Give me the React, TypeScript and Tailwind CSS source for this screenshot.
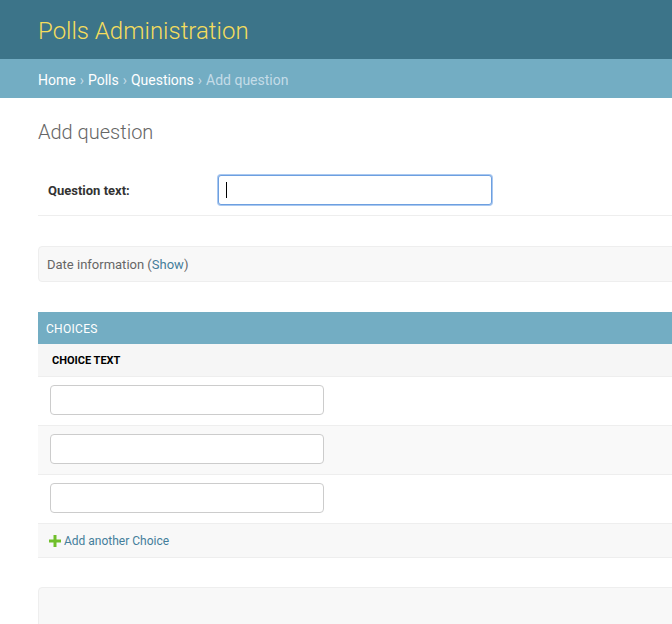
import React from 'react';

const font = { fontFamily: 'Roboto, "Liberation Sans", sans-serif' };

function ChoiceRow({ alt }: { alt?: boolean }) {
  return (
    <div className={`h-[49px] flex items-start pt-[8px] pl-3 border-b border-[#eeeeee] ${alt ? 'bg-[#f9f9f9]' : 'bg-white'}`}>
      <input
        type="text"
        className="w-[274px] h-[30px] border border-[#cccccc] rounded-[4px] bg-white px-1.5 text-[13px] outline-none"
      />
    </div>
  );
}

export default function App() {
  return (
    <div className="w-[672px] h-[624px] overflow-hidden bg-white text-[#333]" style={font}>
      {/* Header */}
      <div className="h-[59px] bg-[#3c7489] flex items-center px-[38px] pt-[3px]">
        <h1 className="text-[24px] font-light text-[#f5dd5d] leading-none">Polls Administration</h1>
      </div>

      {/* Breadcrumbs */}
      <div className="h-[39px] bg-[#73adc3] flex items-center px-[38px] pt-[3px] text-[14px] text-[#c4dce8]">
        <a className="text-white">Home</a>
        <span className="mx-[4px]">›</span>
        <a className="text-white">Polls</a>
        <span className="mx-[4px]">›</span>
        <a className="text-white">Questions</a>
        <span className="mx-[4px]">›</span>
        <span>Add question</span>
      </div>

      {/* Content */}
      <div className="pl-[38px] w-[760px]">
        <h1 className="text-[20px] font-light text-[#666] mt-[22px] leading-[24px]">Add question</h1>

        <div className="mt-[31px] flex items-center h-[30px] border-b border-[#eeeeee] pl-[10px] pb-[10px] box-content">
          <label className="w-[170px] text-[13px] font-bold text-[#333] pt-[1px]">Question text:</label>
          <div className="h-[30px] w-[274px] border border-[#6d9fe0] rounded-[3px] ring-1 ring-[#a9c8f0] bg-white flex items-center pl-[7px]">
            <span className="w-[1px] h-[16px] bg-black" />
          </div>
        </div>

        {/* Collapsed fieldset */}
        <div className="mt-[30px] h-[36px] bg-[#f8f8f8] border border-[#eeeeee] rounded-l-[4px] flex items-center pl-[8px] pt-[1px] text-[13px] text-[#666]">
          Date information&nbsp;(<a className="text-[#447e9b]">Show</a>)
        </div>

        {/* Inline */}
        <div className="mt-[30px]">
          <div className="h-[32px] bg-[#73adc3] flex items-center pl-[8px] pt-[1px] text-[12px] text-white tracking-[0.3px]">CHOICES</div>
          <div className="h-[33px] bg-[#f6f6f6] border-b border-[#eeeeee] flex items-center pl-[14px] pt-[3px] text-[11px] font-bold text-black">
            CHOICE TEXT
          </div>
          <ChoiceRow />
          <ChoiceRow alt />
          <ChoiceRow />
          <div className="h-[34px] bg-[#f8f8f8] border-b border-[#eeeeee] flex items-center pl-[11px] pt-[1px] text-[12px] text-[#447e9b]">
            <svg width="12" height="12" viewBox="0 0 12 12" className="mr-[3px]">
              <path d="M4.5 0h3v4.5H12v3H7.5V12h-3V7.5H0v-3h4.5z" fill="#70bf2b" />
            </svg>
            Add another Choice
          </div>
        </div>

        {/* Submit row */}
        <div className="mt-[29px] h-[60px] bg-[#f8f8f8] border border-[#eeeeee] rounded-l-[4px]" />
      </div>
    </div>
  );
}
